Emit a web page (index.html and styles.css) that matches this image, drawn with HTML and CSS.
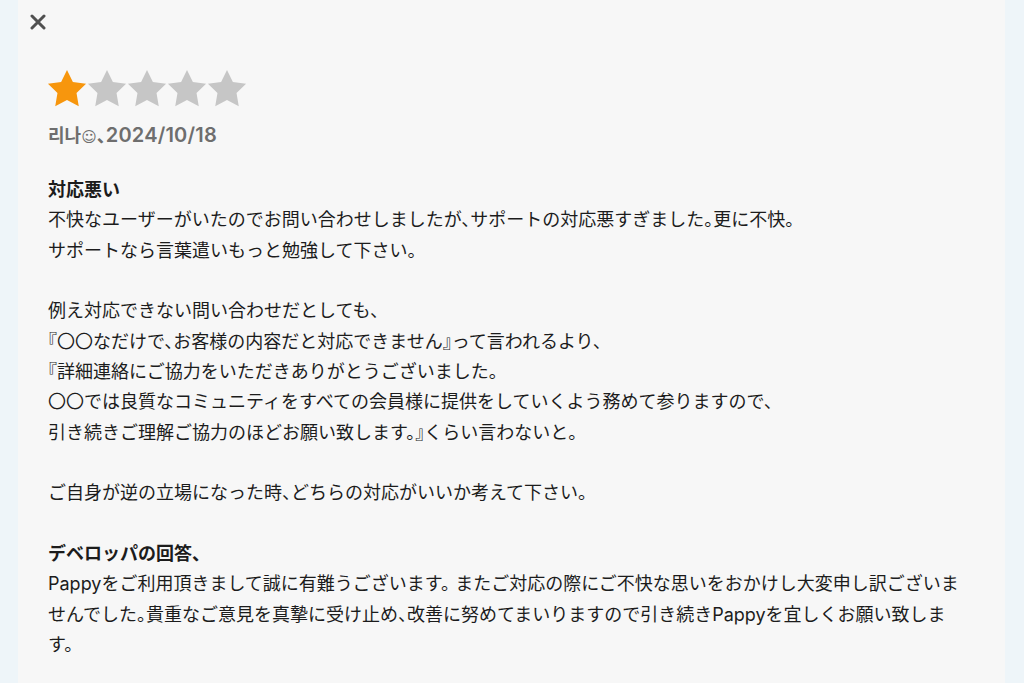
FILE: index.html
```html
<!DOCTYPE html>
<html lang="ja">
<head>
<meta charset="utf-8">
<title>レビュー</title>
<link rel="stylesheet" href="styles.css">
</head>
<body>
<div class="card">
  <div class="toolbar">
    <button class="close" aria-label="閉じる">
      <svg width="16" height="16" viewBox="0 0 16 16"><path d="M2 2L14 14M14 2L2 14" stroke="#505050" stroke-width="3" stroke-linecap="round"/></svg>
    </button>
  </div>
  <div class="review">
    <div class="stars">
      <svg class="star on" viewBox="1.5 1.5 21 21"><path d="M12 2l3.09 6.26L22 9.27l-5 4.87 1.18 6.88L12 17.77l-6.18 3.25L7 14.14 2 9.27l6.91-1.01L12 2z"/></svg>
      <svg class="star" viewBox="1.5 1.5 21 21"><path d="M12 2l3.09 6.26L22 9.27l-5 4.87 1.18 6.88L12 17.77l-6.18 3.25L7 14.14 2 9.27l6.91-1.01L12 2z"/></svg>
      <svg class="star" viewBox="1.5 1.5 21 21"><path d="M12 2l3.09 6.26L22 9.27l-5 4.87 1.18 6.88L12 17.77l-6.18 3.25L7 14.14 2 9.27l6.91-1.01L12 2z"/></svg>
      <svg class="star" viewBox="1.5 1.5 21 21"><path d="M12 2l3.09 6.26L22 9.27l-5 4.87 1.18 6.88L12 17.77l-6.18 3.25L7 14.14 2 9.27l6.91-1.01L12 2z"/></svg>
      <svg class="star" viewBox="1.5 1.5 21 21"><path d="M12 2l3.09 6.26L22 9.27l-5 4.87 1.18 6.88L12 17.77l-6.18 3.25L7 14.14 2 9.27l6.91-1.01L12 2z"/></svg>
    </div>
    <div class="meta">리나<span class="smile">☺</span>、<span class="date">2024/10/18</span></div>
    <div class="body">
      <p class="title">対応悪い</p>
      <p>不快なユーザーがいたのでお問い合わせしましたが、サポートの対応悪すぎました。更に不快。<br>サポートなら言葉遣いもっと勉強して下さい。</p>
      <p>例え対応できない問い合わせだとしても、<br>『〇〇なだけで、お客様の内容だと対応できません』って言われるより、<br>『詳細連絡にご協力をいただきありがとうございました。<br>〇〇では良質なコミュニティをすべての会員様に提供をしていくよう務めて参りますので、<br>引き続きご理解ご協力のほどお願い致します。』くらい言わないと。</p>
      <p>ご自身が逆の立場になった時、どちらの対応がいいか考えて下さい。</p>
      <p class="title">デベロッパの回答、</p>
      <p>Pappyをご利用頂きまして誠に有難うございます。 またご対応の際にご不快な思いをおかけし大変申し訳ございま<br>せんでした。貴重なご意見を真摯に受け止め、改善に努めてまいりますので引き続きPappyを宜しくお願い致しま<br>す。</p>
    </div>
  </div>
</div>
</body>
</html>
```
FILE: styles.css
```css
html, body {
  margin: 0;
  padding: 0;
}
body {
  background: #eef5f9;
  font-family: "Inter", "Noto Sans CJK JP", sans-serif;
  color: #1c1c1c;
}
.card {
  margin: 0 19px 0 18px;
  min-height: 683px;
  background: #f7f7f7;
  box-sizing: border-box;
  padding-top: 14px;
}
.toolbar {
  padding-left: 12px;
  height: 16px;
}
.close {
  display: block;
  width: 16px;
  height: 16px;
  padding: 0;
  border: 0;
  background: none;
}
.close svg {
  display: block;
}
.review {
  padding: 0 30px;
  margin-top: 39px;
}
.stars {
  display: flex;
  margin-left: -1px;
  height: 40px;
}
.star {
  width: 40px;
  height: 40px;
  fill: #c6c6c6;
}
.star.on {
  fill: #f7960d;
}
.meta {
  margin-top: 11px;
  font-size: 18px;
  line-height: 30px;
  font-weight: 600;
  color: #6e6e6e;
  font-feature-settings: "halt";
}
.smile {
  font-family: "DejaVu Sans", sans-serif;
  font-size: 15px;
  font-weight: 400;
}
.date {
  font-size: 20px;
  letter-spacing: 0.2px;
}
.body {
  margin-top: 23px;
  font-size: 18px;
  line-height: 30.33px;
  font-feature-settings: "halt";
}
.body p {
  margin: 0 0 30.33px;
  white-space: nowrap;
}
.body p.title {
  margin: 0;
  font-weight: 700;
}
```
